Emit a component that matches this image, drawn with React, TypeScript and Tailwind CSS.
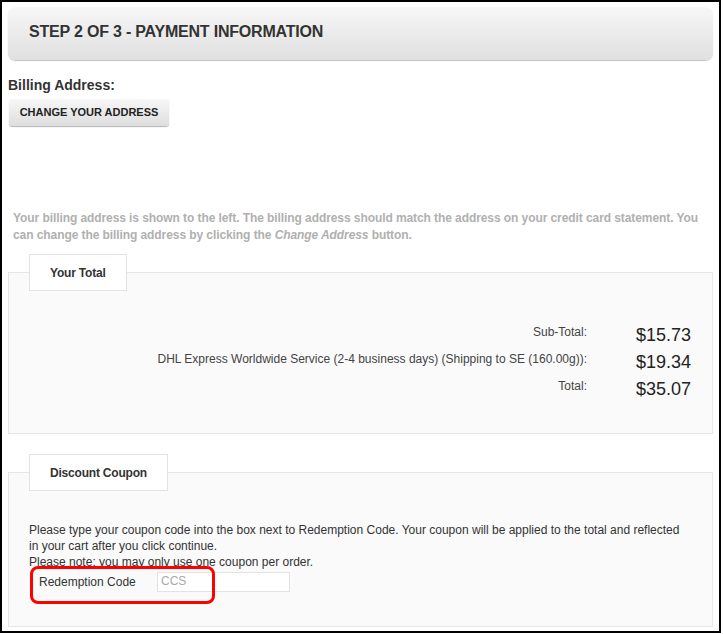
const totals = [
  { label: 'Sub-Total:', value: '$15.73' },
  { label: 'DHL Express Worldwide Service (2-4 business days) (Shipping to SE (160.00g)):', value: '$19.34' },
  { label: 'Total:', value: '$35.07' },
];

function Legend({ children }: { children: React.ReactNode }) {
  return (
    <div className="absolute left-[20px] -top-[19px] h-[37px] bg-white border border-[#e3e3e3] px-[20px] flex items-center text-[12px] font-bold tracking-[-0.2px] text-[#333]">
      {children}
    </div>
  );
}

export default function App() {
  return (
    <div className="w-[721px] h-[633px] border-2 border-black bg-white font-['Liberation_Sans',Arial,sans-serif] text-[#333] relative">
      <div className="mx-[6px] mt-[5px] h-[53px] rounded-[8px] bg-gradient-to-b from-[#f7f7f7] to-[#e0e0e0] shadow-[0_1px_1px_rgba(0,0,0,0.25)] flex items-center pl-[21px] pb-[3px]">
        <h1 className="text-[16px] font-bold tracking-[-0.2px] text-[#333]">STEP 2 OF 3 - PAYMENT INFORMATION</h1>
      </div>

      <div className="px-[6px]">
        <div className="mt-[17px] text-[14px] font-bold leading-[17px]">Billing Address:</div>
        <button className="mt-[5px] ml-[1px] h-[27px] w-[160px] rounded-[3px] bg-gradient-to-b from-[#f7f7f7] to-[#dedede] shadow-[0_1px_1px_rgba(0,0,0,0.3)] text-[11px] font-bold text-[#222]">
          CHANGE YOUR ADDRESS
        </button>

        <p className="mt-[84px] px-[5px] text-[12px] leading-[17px] font-bold text-[#b0b0b0] tracking-[-0.08px] whitespace-nowrap">
          Your billing address is shown to the left. The billing address should match the address on your credit card statement. You
          <br />
          can change the billing address by clicking the <i>Change Address</i> button.
        </p>

        <div className="relative mt-[28px] h-[162px] border border-[#e6e6e6] bg-[#fafafa]">
          <Legend>Your Total</Legend>
          <div className="pt-[52px] pr-[21px] flex flex-col gap-[6px]">
            {totals.map((t) => (
              <div key={t.value} className="flex justify-end items-center h-[21px]">
                <span className="text-[12px] text-[#444] -mt-[8px]">{t.label}</span>
                <span className="w-[104px] text-right text-[18px] text-[#222]">{t.value}</span>
              </div>
            ))}
          </div>
        </div>

        <div className="relative mt-[38px] h-[155px] border border-[#e6e6e6] bg-[#fafafa]">
          <Legend>Discount Coupon</Legend>
          <div className="pt-[49px] px-[20px] text-[12px] leading-[16px] text-[#333]">
            <p>
              Please type your coupon code into the box next to Redemption Code. Your coupon will be applied to the total and reflected
              in your cart after you click continue.
            </p>
            <p>Please note: you may only use one coupon per order.</p>
            <div className="relative flex items-center mt-[1px] h-[22px]">
              <span className="ml-[10px] w-[118px]">Redemption Code</span>
              <div className="w-[133px] h-[20px] border border-[#e3e3e3] bg-white text-[#aaa] pl-[3px] leading-[16px]">CCS</div>
              <div className="absolute left-[1px] -top-[5px] w-[185px] h-[38px] border-[3px] border-[#ff0000] rounded-[8px]" />
            </div>
          </div>
        </div>
      </div>
    </div>
  );
}
